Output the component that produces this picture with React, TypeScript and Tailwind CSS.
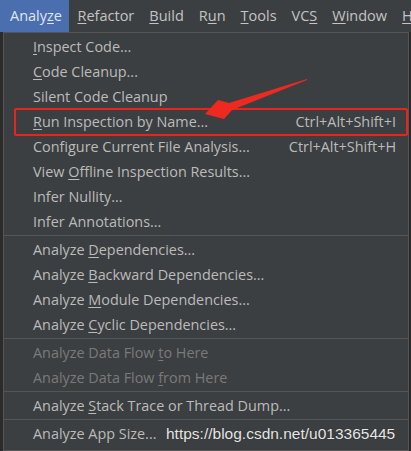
import React from "react";

const U = ({ c }: { c: string }) => <span className="underline underline-offset-2 decoration-1">{c}</span>;

type Item = { label: React.ReactNode; shortcut?: string; disabled?: boolean } | "sep";

const items: Item[] = [
  { label: <><U c="I" />nspect Code...</> },
  { label: <><U c="C" />ode Cleanup...</> },
  { label: <>Silent Code Cleanup</> },
  { label: <><U c="R" />un Inspection by Name...</>, shortcut: "Ctrl+Alt+Shift+I" },
  { label: <>Configure Current File Analysis...</>, shortcut: "Ctrl+Alt+Shift+H" },
  { label: <>View <U c="O" />ffline Inspection Results...</> },
  { label: <>Infer Nullity...</> },
  { label: <>Infer Annotations...</> },
  "sep",
  { label: <>Analyze <U c="D" />ependencies...</> },
  { label: <>Analyze <U c="B" />ackward Dependencies...</> },
  { label: <>Analyze <U c="M" />odule Dependencies...</> },
  { label: <>Analyze <U c="C" />yclic Dependencies...</> },
  "sep",
  { label: <>Analyze Data Flow <U c="t" />o Here</>, disabled: true },
  { label: <>Analyze Data Flow <U c="f" />rom Here</>, disabled: true },
  "sep",
  { label: <>Analyze <U c="S" />tack Trace or Thread Dump...</> },
  "sep",
  { label: <>Analyze App Size...</> },
];

const menus: React.ReactNode[] = [
  <>Analy<U c="z" />e</>,
  <><U c="R" />efactor</>,
  <><U c="B" />uild</>,
  <>R<U c="u" />n</>,
  <><U c="T" />ools</>,
  <>VC<U c="S" /></>,
  <><U c="W" />indow</>,
  <><U c="H" /></>,
];

export default function App() {
  return (
    <div
      className="relative w-[411px] h-[451px] overflow-hidden bg-[#3c3f41] text-[#bbbbbb]"
      style={{ fontFamily: '"Open Sans", "Noto Sans", sans-serif' }}
    >
      <div className="flex h-[32px] items-center text-[14.5px] text-[#c4c4c4] whitespace-nowrap">
        {menus.map((m, i) => (
          <div
            key={i}
            className={
              i === 0
                ? "h-full flex items-center pl-[10px] pr-[7px] mr-[1px] bg-[#4b6eaf] text-[#dfe6f2]"
                : "h-full flex items-center px-[7.5px]"
            }
          >
            {m}
          </div>
        ))}
      </div>
      <div className="flex h-[419px]">
        <div className="w-[3px] bg-[#2b2b2b]" />
        <div className="flex-1 border border-[#555555] bg-[#3c3f41] text-[14.4px] pt-[1px]">
          {items.map((it, i) =>
            it === "sep" ? (
              <div key={i} className="h-[3px] flex items-center">
                <div className="h-px w-full bg-[#555555]" />
              </div>
            ) : (
              <div
                key={i}
                className={
                  "h-[25px] flex items-center justify-between pl-[29px] pr-[12px] whitespace-nowrap " +
                  (it.disabled ? "text-[#7a7a7a]" : "text-[#bbbbbb]")
                }
              >
                <span>{it.label}</span>
                {it.shortcut && <span>{it.shortcut}</span>}
              </div>
            )
          )}
        </div>
        <div className="w-[2px] bg-[#2b2b2b]" />
      </div>

      {/* red highlight box */}
      <div className="absolute left-[14px] top-[108px] w-[394px] h-[28px] border-2 border-[#e8241c] rounded-[2px]" />

      {/* arrow */}
      <svg className="absolute left-0 top-0" width="411" height="451" viewBox="0 0 411 451">
        <polygon
          points="307,79 229,103 218,100 205,114 224,119 232,110 307,80"
          fill="#ee2a20"
        />
      </svg>

      {/* watermark */}
      <div
        className="absolute left-[166px] top-[422px] text-[15.5px] text-[#e6e6e6] whitespace-nowrap"
        style={{ fontFamily: '"Liberation Sans", Arial, sans-serif', textShadow: "0 0 1px #222" }}
      >
        https://blog.csdn.net/u013365445
      </div>
    </div>
  );
}
